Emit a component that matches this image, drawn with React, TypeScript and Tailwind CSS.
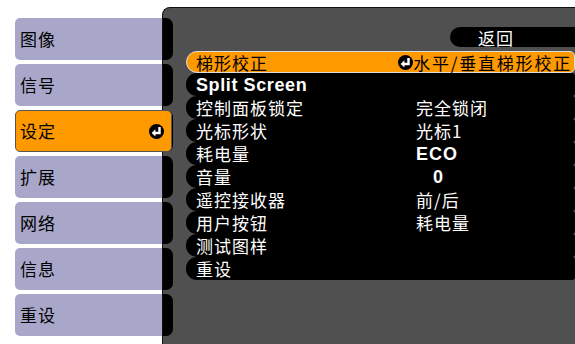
const cjk = { fontFamily: '"Noto Sans CJK SC", "Noto Sans", sans-serif' }
const latin = { fontFamily: '"Liberation Sans", "Noto Sans CJK SC", sans-serif' }

function EnterIcon() {
  return (
    <svg width="15" height="15" viewBox="0 0 14 14" className="shrink-0">
      <circle cx="7" cy="7" r="7" fill="#000" />
      <path d="M9.8 2.8 V8.3 H5.4" stroke="#fff" strokeWidth="2.3" fill="none" />
      <path d="M2.4 8.3 L6 4.9 V11.7 Z" fill="#fff" />
    </svg>
  )
}

const tabs = ["图像", "信号", "设定", "扩展", "网络", "信息", "重设"]

const rows: { label: string; value?: string; bold?: boolean; latin?: boolean; indent?: boolean }[] = [
  { label: "Split Screen", latin: true },
  { label: "控制面板锁定", value: "完全锁闭" },
  { label: "光标形状", value: "光标1" },
  { label: "耗电量", value: "ECO", bold: true },
  { label: "音量", value: "0", bold: true, indent: true },
  { label: "遥控接收器", value: "前/后" },
  { label: "用户按钮", value: "耗电量" },
  { label: "测试图样" },
  { label: "重设" },
]

export default function App() {
  return (
    <div className="w-[575px] h-[344px] bg-white overflow-hidden flex text-[17px] tracking-[1px]" style={cjk}>
      {/* left menu */}
      <div className="w-[162px] shrink-0 pl-[15px] pt-[18px] flex flex-col gap-[4px]">
        {tabs.map((t, i) =>
          i === 2 ? (
            <div
              key={t}
              className="relative z-10 mr-[-10px] h-[42px] bg-[#ff9900] border border-[#555] rounded-[5px] flex items-center justify-between pl-[4px] pr-[7px] text-black"
            >
              <span>{t}</span>
              <EnterIcon />
            </div>
          ) : (
            <div key={t} className="h-[42px] bg-[#a9a7c9] rounded-l-[5px] flex items-center pl-[5px] text-black">
              {t}
            </div>
          )
        )}
      </div>

      {/* main panel */}
      <div className="flex-1 mt-[7px] bg-[#505050] border-l border-t border-[#111] rounded-tl-[8px] flex">
        <div className="w-[10px] shrink-0 pt-[10px] flex flex-col gap-[4px]">
          {tabs.map((t) => (
            <div key={t} className="h-[42px] bg-black rounded-r-[7px]" />
          ))}
        </div>

        <div className="flex-1 pl-[13px] pt-[19px] flex flex-col">
          <div className="self-end w-[125px] h-[20px] bg-black rounded-l-full text-white flex items-center pl-[28px] leading-none">
            返回
          </div>

          <div className="mt-[4px] h-[22px] bg-[#ff9900] border border-[#ddd] rounded-l-[11px] rounded-r-[5px] flex items-center justify-between pl-[9px] pr-[2px] text-black leading-none">
            <span>梯形校正</span>
            <span className="flex items-center">
              <EnterIcon />
              <span className="tracking-[1.8px]">水平/垂直梯形校正</span>
            </span>
          </div>

          <div className="flex flex-col">
            {rows.map((r) => (
              <div
                key={r.label}
                className="h-[23px] bg-black rounded-l-[11px] rounded-r-[3px] flex items-center pl-[10px] text-white leading-none"
              >
                <span
                  className={r.latin ? "w-[220px] font-bold text-[18px] tracking-[0.6px]" : "w-[220px]"}
                  style={r.latin ? latin : undefined}
                >
                  {r.label}
                </span>
                {r.value && (
                  <span
                    className={(r.bold ? "font-bold text-[18px] " : "") + (r.indent ? "pl-[17px]" : "")}
                    style={r.bold ? latin : undefined}
                  >
                    {r.value}
                  </span>
                )}
              </div>
            ))}
          </div>
        </div>
      </div>
    </div>
  )
}
